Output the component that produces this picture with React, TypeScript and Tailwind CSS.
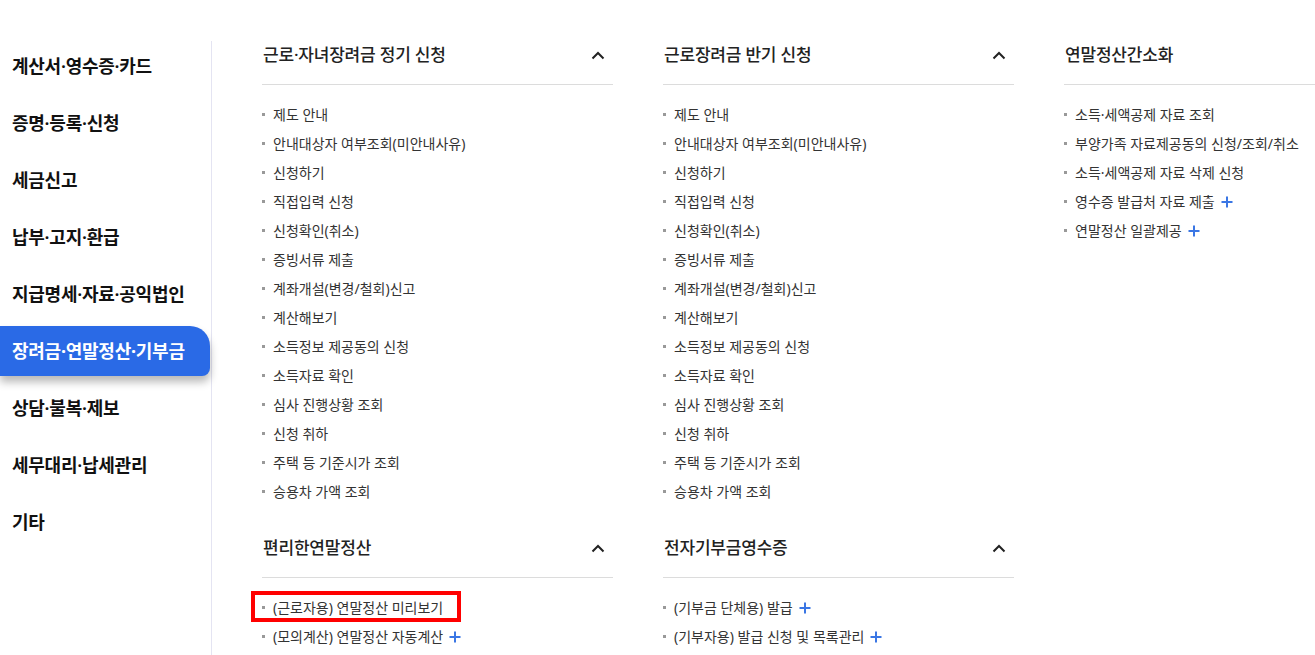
import React from "react";

type Item = { label: string; plus?: boolean; marked?: boolean };
type Section = { title: string; collapsible?: boolean; items: Item[] };

const sideMenu = [
  "계산서·영수증·카드",
  "증명·등록·신청",
  "세금신고",
  "납부·고지·환급",
  "지급명세·자료·공익법인",
  "장려금·연말정산·기부금",
  "상담·불복·제보",
  "세무대리·납세관리",
  "기타",
];

const regularItems: Item[] = [
  { label: "제도 안내" },
  { label: "안내대상자 여부조회(미안내사유)" },
  { label: "신청하기" },
  { label: "직접입력 신청" },
  { label: "신청확인(취소)" },
  { label: "증빙서류 제출" },
  { label: "계좌개설(변경/철회)신고" },
  { label: "계산해보기" },
  { label: "소득정보 제공동의 신청" },
  { label: "소득자료 확인" },
  { label: "심사 진행상황 조회" },
  { label: "신청 취하" },
  { label: "주택 등 기준시가 조회" },
  { label: "승용차 가액 조회" },
];

const columns: Section[][] = [
  [
    { title: "근로·자녀장려금 정기 신청", collapsible: true, items: regularItems },
    {
      title: "편리한연말정산",
      collapsible: true,
      items: [
        { label: "(근로자용) 연말정산 미리보기", marked: true },
        { label: "(모의계산) 연말정산 자동계산", plus: true },
      ],
    },
  ],
  [
    { title: "근로장려금 반기 신청", collapsible: true, items: regularItems },
    {
      title: "전자기부금영수증",
      collapsible: true,
      items: [
        { label: "(기부금 단체용) 발급", plus: true },
        { label: "(기부자용) 발급 신청 및 목록관리", plus: true },
      ],
    },
  ],
  [
    {
      title: "연말정산간소화",
      items: [
        { label: "소득·세액공제 자료 조회" },
        { label: "부양가족 자료제공동의 신청/조회/취소" },
        { label: "소득·세액공제 자료 삭제 신청" },
        { label: "영수증 발급처 자료 제출", plus: true },
        { label: "연말정산 일괄제공", plus: true },
      ],
    },
  ],
];

function ChevronUp() {
  return (
    <svg width="14" height="9" viewBox="0 0 14 9" fill="none">
      <path d="M1.5 7.5 L7 2 L12.5 7.5" stroke="#222" strokeWidth="2" />
    </svg>
  );
}

function Plus() {
  return (
    <svg width="12" height="12" viewBox="0 0 12 12" className="ml-[6px] shrink-0">
      <path d="M6 0.5 V11.5 M0.5 6 H11.5" stroke="#3a76e4" strokeWidth="2" />
    </svg>
  );
}

function MenuSection({ section }: { section: Section }) {
  return (
    <div>
      <div className="flex items-center justify-between border-b border-[#dcdcdc] pt-[2px] pb-[17px] pl-px pr-[8px]">
        <h3 className="text-[17px] font-medium leading-6 tracking-[-0.2px] text-[#222]">{section.title}</h3>
        {section.collapsible && <ChevronUp />}
      </div>
      <ul className="pt-[15px]">
        {section.items.map((item) => (
          <li key={item.label} className="relative flex h-[29px] items-center text-[14px] text-[#333]">
            <span className="mr-[8px] h-[3px] w-[3px] shrink-0 bg-[#999]" />
            <span>{item.label}</span>
            {item.plus && <Plus />}
            {item.marked && (
              <span className="pointer-events-none absolute -top-[2px] -left-[11px] h-[31px] w-[210px] border-4 border-[#ff0000]" />
            )}
          </li>
        ))}
      </ul>
    </div>
  );
}

export default function App() {
  return (
    <main
      className="flex h-screen overflow-hidden bg-white pt-[41px]"
      style={{ fontFamily: '"Noto Sans", "Noto Sans CJK KR", sans-serif' }}
    >
      <nav className="flex w-[212px] shrink-0 flex-col gap-[7px] border-r border-[#e4e4f2]">
        {sideMenu.map((name) => {
          const active = name === "장려금·연말정산·기부금";
          return (
            <div
              key={name}
              className={
                active
                  ? "mr-px flex h-[50px] items-center rounded-tr-[20px] rounded-br-[8px] bg-[#2a6ae6] pl-3 text-[18px] font-bold tracking-[-0.25px] text-white shadow-[0_6px_8px_rgba(0,0,0,0.28)]"
                  : "flex h-[50px] items-center pl-3 text-[18px] font-semibold tracking-[-0.25px] text-[#111]"
              }
            >
              {name}
            </div>
          );
        })}
      </nav>

      <div className="ml-[50px] flex shrink-0 gap-[50px]">
        {columns.map((sections, i) => (
          <div key={i} className="flex w-[351px] shrink-0 flex-col gap-[28px]">
            {sections.map((s) => (
              <MenuSection key={s.title} section={s} />
            ))}
          </div>
        ))}
      </div>
    </main>
  );
}
